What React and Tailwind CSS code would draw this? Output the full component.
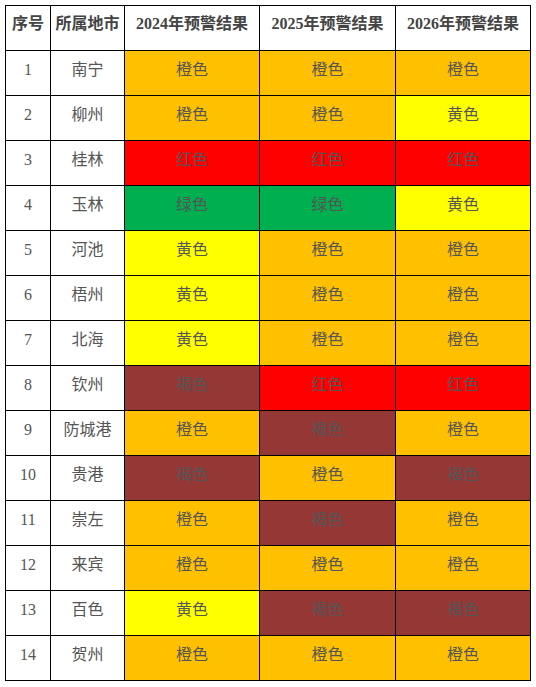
import React from 'react'

const C = {
  o: { label: '橙色', cls: 'bg-[#FFC000]' },
  y: { label: '黄色', cls: 'bg-[#FFFF00]' },
  r: { label: '红色', cls: 'bg-[#FF0000]' },
  g: { label: '绿色', cls: 'bg-[#00B050]' },
  b: { label: '褐色', cls: 'bg-[#953735]' },
}

const rows = [
  ['南宁', 'o', 'o', 'o'],
  ['柳州', 'o', 'o', 'y'],
  ['桂林', 'r', 'r', 'r'],
  ['玉林', 'g', 'g', 'y'],
  ['河池', 'y', 'o', 'o'],
  ['梧州', 'y', 'o', 'o'],
  ['北海', 'y', 'o', 'o'],
  ['钦州', 'b', 'r', 'r'],
  ['防城港', 'o', 'b', 'o'],
  ['贵港', 'b', 'o', 'b'],
  ['崇左', 'o', 'b', 'o'],
  ['来宾', 'o', 'o', 'o'],
  ['百色', 'y', 'b', 'b'],
  ['贺州', 'o', 'o', 'o'],
]

const font = { fontFamily: '"Liberation Serif", "Noto Sans CJK SC", serif' }

export default function App() {
  return (
    <div className="bg-white w-[536px] h-[687px] pt-[5px] pl-[5px]" style={font}>
      <table className="border-collapse table-fixed text-[16px] text-[#555555]">
        <colgroup>
          <col className="w-[45px]" />
          <col className="w-[74px]" />
          <col className="w-[135px]" />
          <col className="w-[136px]" />
          <col className="w-[135px]" />
        </colgroup>
        <thead>
          <tr className="h-[45px]">
            {['序号', '所属地市', '2024年预警结果', '2025年预警结果', '2026年预警结果'].map(h => (
              <th key={h} className="border border-black font-bold text-[#444444] text-center align-middle p-0 pb-[8px] whitespace-nowrap">{h}</th>
            ))}
          </tr>
        </thead>
        <tbody>
          {rows.map((r, i) => (
            <tr key={i} className="h-[45px]">
              <td className="border border-black text-center align-middle p-0 pb-[7px]">{i + 1}</td>
              <td className="border border-black text-center align-middle p-0 pb-[7px]">{r[0]}</td>
              {r.slice(1).map((k, j) => (
                <td key={j} className={`border border-black text-center align-middle p-0 pb-[7px] ${C[k].cls}`}>{C[k].label}</td>
              ))}
            </tr>
          ))}
        </tbody>
      </table>
    </div>
  )
}
